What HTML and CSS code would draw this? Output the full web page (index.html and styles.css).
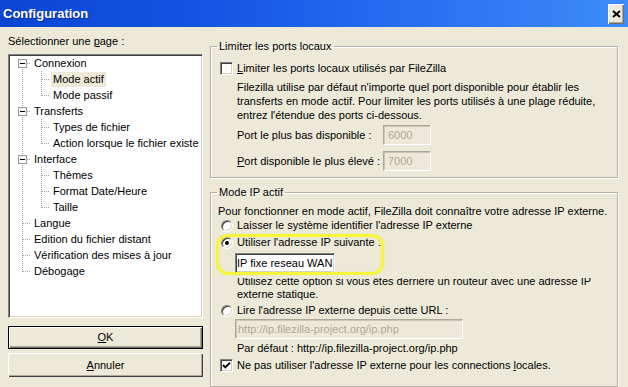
FILE: index.html
```html
<!DOCTYPE html>
<html lang="fr">
<head>
  <meta charset="UTF-8">
  <title>Configuration</title>
  <link rel="stylesheet" href="styles.css">
</head>
<body>
  <div class="window">
    <div class="titlebar">
      <span class="title">Configuration</span>
      <span class="close">
        <svg width="9" height="8" viewBox="0 0 9 8"><path d="M1 1 L8 7 M8 1 L1 7" stroke="#000" stroke-width="2"/></svg>
      </span>
    </div>

    <div class="client">
      <div class="side">
        <div class="side-label">Sélectionner une <u>p</u>age :</div>
        <div class="tree">
          <div class="node root first"><span class="exp"></span><span class="lbl">Connexion</span></div>
          <div class="node child"><span class="lbl selected">Mode actif</span></div>
          <div class="node child last"><span class="lbl">Mode passif</span></div>
          <div class="node root"><span class="exp"></span><span class="lbl">Transferts</span></div>
          <div class="node child"><span class="lbl">Types de fichier</span></div>
          <div class="node child last"><span class="lbl">Action lorsque le fichier existe</span></div>
          <div class="node root"><span class="exp"></span><span class="lbl">Interface</span></div>
          <div class="node child"><span class="lbl">Thèmes</span></div>
          <div class="node child"><span class="lbl">Format Date/Heure</span></div>
          <div class="node child last"><span class="lbl">Taille</span></div>
          <div class="node leaf"><span class="lbl">Langue</span></div>
          <div class="node leaf"><span class="lbl">Edition du fichier distant</span></div>
          <div class="node leaf"><span class="lbl">Vérification des mises à jour</span></div>
          <div class="node leaf last"><span class="lbl">Débogage</span></div>
        </div>
        <div class="btn default"><u>O</u>K</div>
        <div class="btn"><u>A</u>nnuler</div>
      </div>

      <div class="panel">
        <fieldset class="group ports">
          <legend>Limiter les ports locaux</legend>
          <div class="opt">
            <span class="checkbox"></span>
            <span><u>L</u>imiter les ports locaux utilisés par FileZilla</span>
          </div>
          <p class="note">
            Filezilla utilise par défaut n'importe quel port disponible pour établir les<br>
            transferts en mode actif. Pour limiter les ports utilisés à une plage réduite,<br>
            entrez l'étendue des ports ci-dessous.
          </p>
          <div class="port-row first">
            <span class="port-label">Port le plus bas disponible :</span>
            <span class="field disabled short">6000</span>
          </div>
          <div class="port-row">
            <span class="port-label"><u>P</u>ort disponible le plus élevé :</span>
            <span class="field disabled short">7000</span>
          </div>
        </fieldset>

        <fieldset class="group ip">
          <legend>Mode IP actif</legend>
          <div class="intro">Pour fonctionner en mode actif, FileZilla doit connaître votre adresse IP externe.</div>
          <div class="opt radio-row first">
            <span class="radio"></span>
            <span>Laisser le système identifier l'adresse IP externe</span>
          </div>
          <div class="pick">
            <div class="opt radio-row">
              <span class="radio on"></span>
              <span>Utiliser l'adresse IP suivante :</span>
            </div>
            <span class="field ipbox">IP fixe reseau WAN</span>
          </div>
          <p class="note hint">
            Utilisez cette option si vous êtes derrière un routeur avec une adresse IP<br>
            externe statique.
          </p>
          <div class="opt radio-row">
            <span class="radio"></span>
            <span>Lire l'adresse IP externe depuis cette URL :</span>
          </div>
          <span class="field disabled url">http://ip.filezilla-project.org/ip.php</span>
          <p class="note default-url">Par défaut : http://ip.filezilla-project.org/ip.php</p>
          <div class="opt last-check">
            <span class="checkbox">
              <svg width="11" height="11" viewBox="0 0 11 11"><path d="M2 5 L4.3 7.4 L9 2.6" fill="none" stroke="#000" stroke-width="1.9"/></svg>
            </span>
            <span>Ne pas utiliser l'adresse IP externe pour les connections <u>l</u>ocales.</span>
          </div>
        </fieldset>
      </div>
    </div>
  </div>
</body>
</html>
```

FILE: styles.css
```css
html, body {
  margin: 0;
  background: #ece9d8;
}

.window {
  width: 628px;
  height: 387px;
  background: #ece9d8;
  font-family: "Liberation Sans", Arial, sans-serif;
  font-size: 11px;
  line-height: 13px;
  color: #000;
  overflow: hidden;
}

/* title bar */
.titlebar {
  height: 27px;
  display: flex;
  justify-content: space-between;
  align-items: flex-start;
  padding: 0 4px 0 3px;
  background: linear-gradient(to right, #0a45d3 0%, #1656e4 35%, #2a72f2 70%, #3d8cf9 100%);
  box-sizing: border-box;
}

.title {
  margin-top: 6px;
  font-size: 13px;
  line-height: 16px;
  font-weight: bold;
  color: #fff;
  text-shadow: 1px 1px 0 #0a2a8a;
}

.close {
  margin-top: 4px;
  width: 16px;
  height: 20px;
  box-sizing: border-box;
  background: #ece9d8;
  display: flex;
  align-items: center;
  justify-content: center;
  box-shadow: inset 1px 1px 0 #fff, inset -1px -1px 0 #716f64, inset -2px -2px 0 #aca899;
}

/* layout */
.client {
  display: flex;
}

.side {
  width: 195px;
  margin-left: 8px;
}

.side-label {
  margin-top: 8px;
  margin-bottom: 6px;
}

/* tree */
.tree {
  height: 264px;
  box-sizing: border-box;
  background: #fff;
  border: 1px solid;
  border-color: #808080 #fff #fff #808080;
  box-shadow: inset 1px 1px 0 #404040, inset -1px -1px 0 #d4d0c8;
}

.node {
  height: 16px;
  display: flex;
  align-items: center;
  white-space: nowrap;
  background-repeat: no-repeat;
}

.node.root,
.node.leaf {
  background-image:
    repeating-linear-gradient(to bottom, #a0a0a0 0 1px, transparent 1px 2px),
    repeating-linear-gradient(to right, #a0a0a0 0 1px, transparent 1px 2px);
  background-position: 13px 0, 14px 8px;
  background-size: 1px 16px, 8px 1px;
}

.node.root.first {
  background-position: 13px 8px, 14px 8px;
  background-size: 1px 8px, 8px 1px;
}

.node.leaf {
  padding-left: 23px;
}

.node.leaf.last {
  background-size: 1px 9px, 8px 1px;
}

.node.child {
  padding-left: 42px;
  background-image:
    repeating-linear-gradient(to bottom, #a0a0a0 0 1px, transparent 1px 2px),
    repeating-linear-gradient(to bottom, #a0a0a0 0 1px, transparent 1px 2px),
    repeating-linear-gradient(to right, #a0a0a0 0 1px, transparent 1px 2px);
  background-position: 13px 0, 32px 0, 33px 8px;
  background-size: 1px 16px, 1px 16px, 8px 1px;
}

.node.child.last {
  background-size: 1px 16px, 1px 9px, 8px 1px;
}

.exp {
  width: 9px;
  height: 9px;
  margin-left: 9px;
  margin-right: 5px;
  box-sizing: border-box;
  border: 1px solid #919b9c;
  background: linear-gradient(#000, #000) center / 5px 1px no-repeat, #fff;
}

.lbl {
  padding: 0 2px;
  line-height: 15px;
}

.lbl.selected {
  background: #ece9d8;
}

/* buttons */
.btn {
  height: 23px;
  margin-top: 8px;
  box-sizing: border-box;
  display: flex;
  align-items: center;
  justify-content: center;
  background: #ece9d8;
  box-shadow: inset 1px 1px 0 #fff, inset -1px -1px 0 #404040, inset -2px -2px 0 #aca899;
}

.btn.default {
  border: 1px solid #000;
  box-shadow: inset 1px 1px 0 #fff, inset -1px -1px 0 #716f64, inset -2px -2px 0 #aca899;
}

.btn + .btn {
  height: 24px;
  margin-top: 4px;
}

/* right panel */
.panel {
  width: 408px;
  margin-left: 7px;
}

.group {
  margin: 0;
  padding: 0 8px 0 9px;
  border: 1px solid #b5b2a3;
  box-shadow: 1px 1px 0 #fff, inset 1px 1px 0 #fff;
}

.group legend {
  padding: 0 2px;
  margin-left: -3px;
  line-height: 13px;
}

.group.ports {
  margin-top: 13px;
  padding-bottom: 6px;
}

.group.ip {
  margin-top: 8px;
  padding-bottom: 14px;
}

.opt {
  display: flex;
  align-items: center;
  height: 13px;
  gap: 4px;
  white-space: nowrap;
}

.ports .opt {
  margin-top: 9px;
}

.checkbox {
  width: 13px;
  height: 13px;
  box-sizing: border-box;
  flex: none;
  background: #fff;
  border: 1px solid;
  border-color: #808080 #fff #fff #808080;
  box-shadow: inset 1px 1px 0 #404040, inset -1px -1px 0 #d4d0c8;
  display: flex;
  align-items: center;
  justify-content: center;
}

.radio {
  width: 12px;
  height: 12px;
  margin-left: 1px;
  flex: none;
  box-sizing: border-box;
  border-radius: 50%;
  background: #fff;
  border: 1px solid;
  border-color: #808080 #fff #fff #808080;
  box-shadow: inset 1px 1px 0 #404040, inset -1px -1px 0 #d4d0c8;
  display: flex;
  align-items: center;
  justify-content: center;
}

.radio.on::after {
  content: "";
  width: 4px;
  height: 4px;
  border-radius: 50%;
  background: #000;
}

.note {
  margin: 5px 0 0 17px;
  line-height: 14px;
  white-space: nowrap;
}

.port-row {
  display: flex;
  align-items: center;
  margin: 6px 0 0 17px;
}

.port-row.first {
  margin-top: 3px;
}

.port-label {
  width: 146px;
}

.field {
  display: flex;
  align-items: center;
  height: 20px;
  box-sizing: border-box;
  padding-left: 3px;
  border: 1px solid;
  white-space: nowrap;
}

.field.disabled {
  background: #ece9d8;
  color: #aca899;
  border-color: #aca899 #fff #fff #aca899;
  box-shadow: inset 1px 1px 0 #c9c6b8;
}

.field.short {
  width: 48px;
  padding-left: 4px;
}

.intro {
  margin: 6px 0 0 -2px;
  white-space: nowrap;
}

.radio-row {
  margin-top: 3px;
}

.radio-row.first {
  margin-top: 1px;
}

.pick {
  position: relative;
  margin-top: 4px;
}

.pick .radio-row {
  margin-top: 0;
}

.pick::after {
  content: "";
  position: absolute;
  left: -4px;
  top: -2px;
  width: 168px;
  height: 41px;
  box-sizing: border-box;
  border: 3px solid #f6f63a;
  border-radius: 12px;
  box-shadow: 0 0 1px #e6e650, inset 0 0 1px #e6e650;
}

.field.ipbox {
  width: 100px;
  margin: 4px 0 0 15px;
  padding-left: 1px;
  background: #fff;
  border-color: #808080 #fff #fff #808080;
  box-shadow: inset 1px 1px 0 #404040, inset -1px -1px 0 #d4d0c8;
}

.note.hint {
  margin-top: 2px;
  line-height: 13px;
  clip-path: inset(3px 0 0 0);
}

.field.url {
  width: 228px;
  margin: 2px 0 0 15px;
  padding-left: 2px;
}

.note.default-url {
  margin-top: 3px;
  line-height: 13px;
}

.last-check {
  margin-top: 4px;
}
```
